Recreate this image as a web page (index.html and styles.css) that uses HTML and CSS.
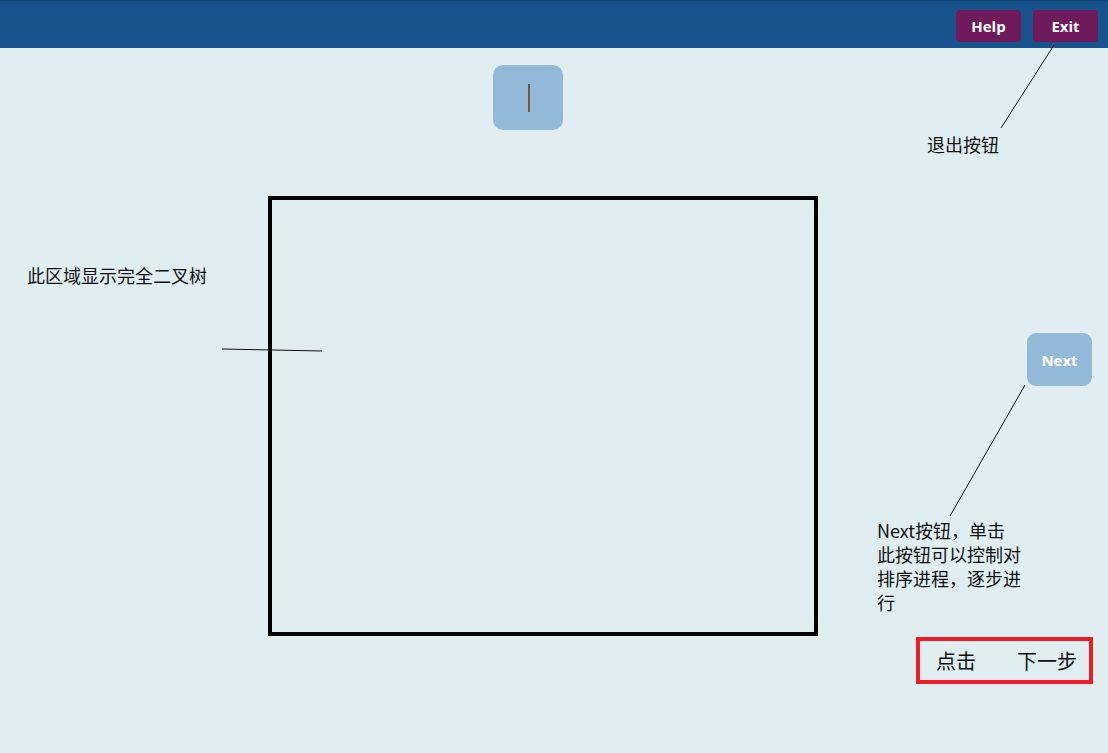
FILE: index.html
```html
<!DOCTYPE html>
<html>
<head>
<meta charset="utf-8">
<link rel="stylesheet" href="styles.css">
</head>
<body>
<header class="topbar">
  <button class="hbtn">Help</button>
  <button class="hbtn">Exit</button>
</header>
<main class="stage">
  <div class="pivot"><span class="caret"></span></div>
  <div class="treebox"></div>
  <div class="note note-exit">退出按钮</div>
  <div class="note note-tree">此区域显示完全二叉树</div>
  <button class="nextbtn">Next</button>
  <div class="note note-next">Next按钮，单击<br>此按钮可以控制对<br>排序进程，逐步进<br>行</div>
  <div class="stepbox"><span>点击</span><span>下一步</span></div>
  <svg class="lines" width="1108" height="705" viewBox="0 0 1108 705">
    <line x1="1054" y1="-3" x2="1001" y2="80" stroke="#111" stroke-width="1"/>
    <line x1="222" y1="301" x2="322" y2="303" stroke="#111" stroke-width="1"/>
    <line x1="1025" y1="337" x2="950" y2="468" stroke="#111" stroke-width="1"/>
  </svg>
</main>
</body>
</html>
```
FILE: styles.css
```css
html, body {
  margin: 0;
  padding: 0;
}
body {
  width: 1108px;
  height: 753px;
  background: #e0eef2;
  font-family: "Noto Sans CJK SC", "Noto Sans", sans-serif;
  overflow: hidden;
}
.topbar {
  height: 48px;
  background: #18538e;
  border-top: 1px solid #10406e;
  box-sizing: border-box;
  display: flex;
  justify-content: flex-end;
  align-items: flex-start;
  gap: 12px;
  padding: 9px 10px 0 0;
}
.hbtn {
  width: 65px;
  height: 32px;
  border: none;
  border-radius: 4px;
  background: #6f1a5b;
  color: #fff;
  font-family: "Open Sans", "Noto Sans", sans-serif;
  font-weight: 700;
  font-size: 15px;
  padding: 0;
}
.stage {
  position: relative;
  height: 705px;
}
.pivot {
  position: absolute;
  left: 493px;
  top: 17px;
  width: 70px;
  height: 65px;
  border-radius: 10px;
  background: #93b9d9;
  display: flex;
  justify-content: center;
  align-items: center;
}
.caret {
  width: 2px;
  height: 28px;
  background: #7a5538;
  margin-left: 1px;
}
.treebox {
  position: absolute;
  left: 268px;
  top: 148px;
  width: 550px;
  height: 440px;
  border: 4px solid #000;
  box-sizing: border-box;
}
.note {
  position: absolute;
  color: #111;
  font-size: 18px;
  line-height: 24px;
  white-space: nowrap;
}
.note-exit {
  left: 927px;
  top: 84px;
}
.note-tree {
  left: 27px;
  top: 215px;
}
.note-next {
  left: 877px;
  top: 470px;
}
.nextbtn {
  position: absolute;
  left: 1027px;
  top: 285px;
  width: 65px;
  height: 53px;
  border: none;
  border-radius: 9px;
  background: #93b9d9;
  color: #fff;
  font-family: "Open Sans", "Noto Sans", sans-serif;
  font-weight: 700;
  font-size: 15px;
  padding: 0;
}
.stepbox {
  position: absolute;
  left: 916px;
  top: 589px;
  width: 177px;
  height: 47px;
  border: 4px solid #ee1c24;
  box-sizing: border-box;
  display: flex;
  align-items: center;
  gap: 41px;
  padding-left: 16px;
  font-size: 20px;
  color: #111;
}
.lines {
  position: absolute;
  left: 0;
  top: 0;
  pointer-events: none;
  overflow: visible;
}
```
